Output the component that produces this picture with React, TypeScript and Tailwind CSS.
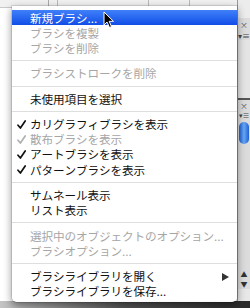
import React from "react";

type Item =
  | { sep: true }
  | { sep?: false; t: string; dots?: boolean; dis?: boolean; hl?: boolean; check?: boolean; sub?: boolean };

const items: Item[] = [
  { t: "新規ブラシ", dots: true, hl: true },
  { t: "ブラシを複製", dis: true },
  { t: "ブラシを削除", dis: true },
  { sep: true },
  { t: "ブラシストロークを削除", dis: true },
  { sep: true },
  { t: "未使用項目を選択" },
  { sep: true },
  { t: "カリグラフィブラシを表示", check: true },
  { t: "散布ブラシを表示", check: true, dis: true },
  { t: "アートブラシを表示", check: true },
  { t: "パターンブラシを表示", check: true },
  { sep: true },
  { t: "サムネール表示" },
  { t: "リスト表示" },
  { sep: true },
  { t: "選択中のオブジェクトのオプション", dots: true, dis: true },
  { t: "ブラシオプション", dots: true, dis: true },
  { sep: true },
  { t: "ブラシライブラリを開く", sub: true },
  { t: "ブラシライブラリを保存", dots: true },
];

function Check({ dis }: { dis?: boolean }) {
  return (
    <svg width="9" height="9" viewBox="0 0 9 9" className="shrink-0">
      <path
        d="M1 5.2 L3.4 8 L8.2 1"
        fill="none"
        stroke={dis ? "#b0b0b0" : "#111"}
        strokeWidth="1.7"
        strokeLinecap="round"
        strokeLinejoin="round"
      />
    </svg>
  );
}

function Label({ t }: { t: string }) {
  return (
    <span className="flex h-[12px]">
      {Array.from(t).map((c, i) => (
        <span key={i} className="block w-[11.5px] h-[12px] text-center">
          {c}
        </span>
      ))}
    </span>
  );
}

export default function App() {
  return (
    <div className="relative w-[250px] h-[308px] overflow-hidden bg-white font-['Noto_Sans_CJK_JP','Noto_Sans',sans-serif]">
      {/* background window */}
      <div className="flex flex-col w-full h-full">
        <div className="flex flex-1">
          <div className="flex flex-col flex-1">
            <div className="h-[8px] bg-[#f1f1f1] border-b border-[#c9c9c9] flex">
              <div className="w-[48px]" />
              <div className="w-[1px] bg-[#aaa]" />
              <div className="w-[8px]" />
              <div className="w-[1px] bg-[#bbb]" />
              <div className="w-[90px]" />
              <div className="w-[1px] bg-[#bbb]" />
              <div className="w-[40px]" />
              <div className="w-[1px] bg-[#bbb]" />
            </div>
            <div className="flex-1 bg-white" />
          </div>
          <div className="w-[13px] flex flex-col bg-[#dcdcdc] border-l border-[#9a9a9a]">
            <div className="h-[18px] bg-[#ececec]" />
            <div className="h-[14px] flex items-center justify-center text-[8px] leading-none text-[#555]">×</div>
            <div className="h-[8px] flex items-center justify-center text-[8px] leading-none text-[#444]">▾≡</div>
            <div className="h-[58px] bg-[#e4e4e4]" />
            <div className="h-[2px] bg-[#555]" />
            <div className="h-[12px] flex items-center justify-center text-[8px] leading-none text-[#555]">×</div>
            <div className="h-[6px] flex items-center justify-center text-[7px] leading-none text-[#444]">▾≡</div>
            <div className="mx-[1px] mt-[4px] h-[22px] rounded-full bg-linear-to-r from-[#1a5fd8] via-[#6aa8f5] to-[#1a5fd8]" />
            <div className="flex-1" />
            <div className="h-[10px] flex items-center justify-center text-[7px] leading-none text-[#333]">▲</div>
            <div className="h-[10px] flex items-center justify-center text-[7px] leading-none text-[#333]">▼</div>
            <div className="h-[12px] bg-[#e8e8e8]" />
          </div>
        </div>
        <div className="h-[7px] bg-linear-to-r from-[#c4c4c4] via-[#555] to-[#2a2a2a]" />
      </div>

      {/* popup menu */}
      <div className="absolute left-[12px] top-[6px] w-[225px] pt-[4px] pb-[3px] bg-white/[0.97] rounded-b-[5px] shadow-[0_3px_8px_rgba(0,0,0,0.45)] ring-1 ring-black/10">
        {items.map((it, i) =>
          it.sep ? (
            <div key={i} className="h-[10.2px] flex items-center">
              <div className="h-[1px] w-full bg-[#dedede]" />
            </div>
          ) : (
            <div
              key={i}
              className={
                "h-[15.2px] flex items-center relative text-[11.6px] leading-[12px] whitespace-nowrap " +
                (it.hl
                  ? "bg-linear-to-b from-[#4080f8] to-[#124ce8] text-white"
                  : it.dis
                  ? "text-[#a6a6a6]"
                  : "text-[#111]")
              }
            >
              <div className="w-[18px] flex justify-center pl-[1px]">
                {it.check ? <Check dis={it.dis} /> : null}
              </div>
              <Label t={it.t} />
              {it.dots ? <span className="block h-[12px]">...</span> : null}
              {it.sub ? (
                <svg width="7" height="8" viewBox="0 0 7 8" className="absolute right-[8px] top-[4px]">
                  <path d="M0 0 L7 4 L0 8 Z" fill="#333" />
                </svg>
              ) : null}
            </div>
          )
        )}
      </div>

      {/* mouse cursor */}
      <svg width="12" height="18" viewBox="0 0 12 18" className="absolute left-[103px] top-[11px]">
        <path
          d="M1 1 L1 14 L4 11 L6.5 16.5 L8.5 15.6 L6.2 10.3 L10.5 10.3 Z"
          fill="#000"
          stroke="#fff"
          strokeWidth="1"
          strokeLinejoin="round"
        />
      </svg>
    </div>
  );
}
